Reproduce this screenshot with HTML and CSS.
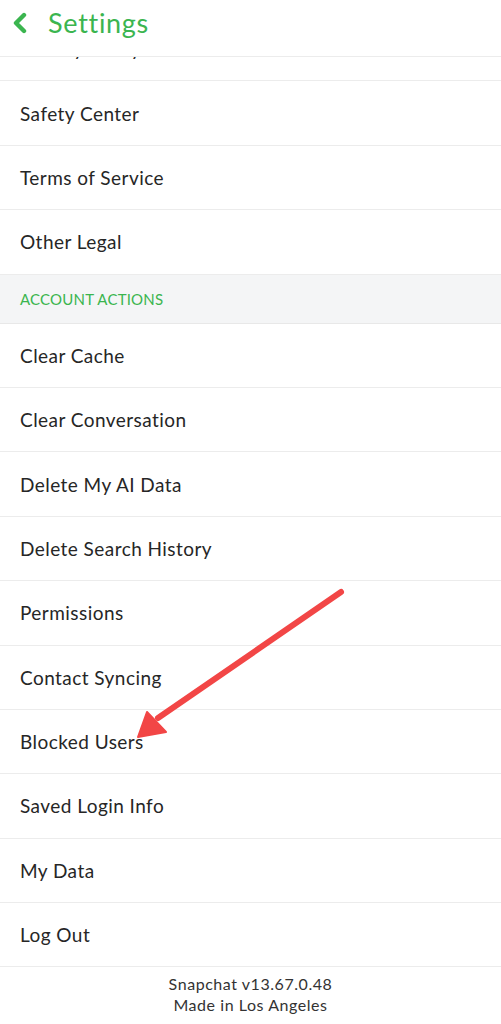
FILE: index.html
```html
<!DOCTYPE html>
<html>
<head>
<meta charset="utf-8">
<link rel="stylesheet" href="styles.css">
</head>
<body>
<div class="screen">
  <header class="topbar">
    <svg class="back" width="16" height="22" viewBox="0 0 16 22"><path d="M12 3 L4 11 L12 19" fill="none" stroke="#3bb54f" stroke-width="4.4" stroke-linecap="round" stroke-linejoin="round"/></svg>
    <span class="title">Settings</span>
  </header>
  <div class="list">
    <div class="row partial"><span>Privacy Policy</span></div>
    <div class="row"><span>Safety Center</span></div>
    <div class="row"><span>Terms of Service</span></div>
    <div class="row"><span>Other Legal</span></div>
    <div class="section">ACCOUNT ACTIONS</div>
    <div class="row"><span>Clear Cache</span></div>
    <div class="row"><span>Clear Conversation</span></div>
    <div class="row"><span>Delete My AI Data</span></div>
    <div class="row"><span>Delete Search History</span></div>
    <div class="row"><span>Permissions</span></div>
    <div class="row"><span>Contact Syncing</span></div>
    <div class="row"><span>Blocked Users</span></div>
    <div class="row"><span>Saved Login Info</span></div>
    <div class="row"><span>My Data</span></div>
    <div class="row"><span>Log Out</span></div>
    <div class="footer">
      <div>Snapchat v13.67.0.48</div>
      <div>Made in Los Angeles</div>
    </div>
  </div>
  <svg class="arrow" width="501" height="1024" viewBox="0 0 501 1024">
    <line x1="341" y1="592" x2="158" y2="718" stroke="#f24646" stroke-width="6" stroke-linecap="round"/>
    <polygon points="138,737 147,712 166,732" fill="#f24646" stroke="#f24646" stroke-width="2" stroke-linejoin="round"/>
  </svg>
</div>
</body>
</html>
```
FILE: styles.css
```css
html, body {
  margin: 0;
  padding: 0;
  background: #ffffff;
}
.screen {
  position: relative;
  width: 501px;
  height: 1024px;
  overflow: hidden;
  font-family: "Lato", "Open Sans", sans-serif;
  color: #262626;
}
.topbar {
  height: 56px;
  border-bottom: 1px solid #ececec;
  display: flex;
  align-items: center;
  padding-left: 12px;
  gap: 20px;
  background: #fff;
  position: relative;
  z-index: 2;
}
.back {
  margin-top: -10px;
}
.title {
  color: #3bb54f;
  font-size: 27px;
  letter-spacing: 0.7px;
  margin-top: -11px;
}
.list {
  display: flex;
  flex-direction: column;
}
.row {
  height: 63.4px;
  border-bottom: 1px solid #ececec;
  display: flex;
  align-items: center;
  padding-left: 20px;
  font-size: 19px;
  letter-spacing: 0.45px;
  flex-shrink: 0;
}
.row.partial {
  margin-top: -40px;
}
.section {
  height: 48px;
  background: #f4f5f6;
  border-bottom: 1px solid #e8e8e8;
  display: flex;
  align-items: center;
  padding-left: 20px;
  color: #3bb54f;
  font-size: 15px;
  letter-spacing: 0.2px;
  flex-shrink: 0;
  margin-top: -1px;
  border-top: 1px solid #ececec;
}
.footer {
  text-align: center;
  font-size: 16px;
  line-height: 21px;
  color: #333;
  padding-top: 6px;
  letter-spacing: 0.55px;
}
.arrow {
  position: absolute;
  left: 0;
  top: 0;
  pointer-events: none;
  z-index: 3;
}
```
